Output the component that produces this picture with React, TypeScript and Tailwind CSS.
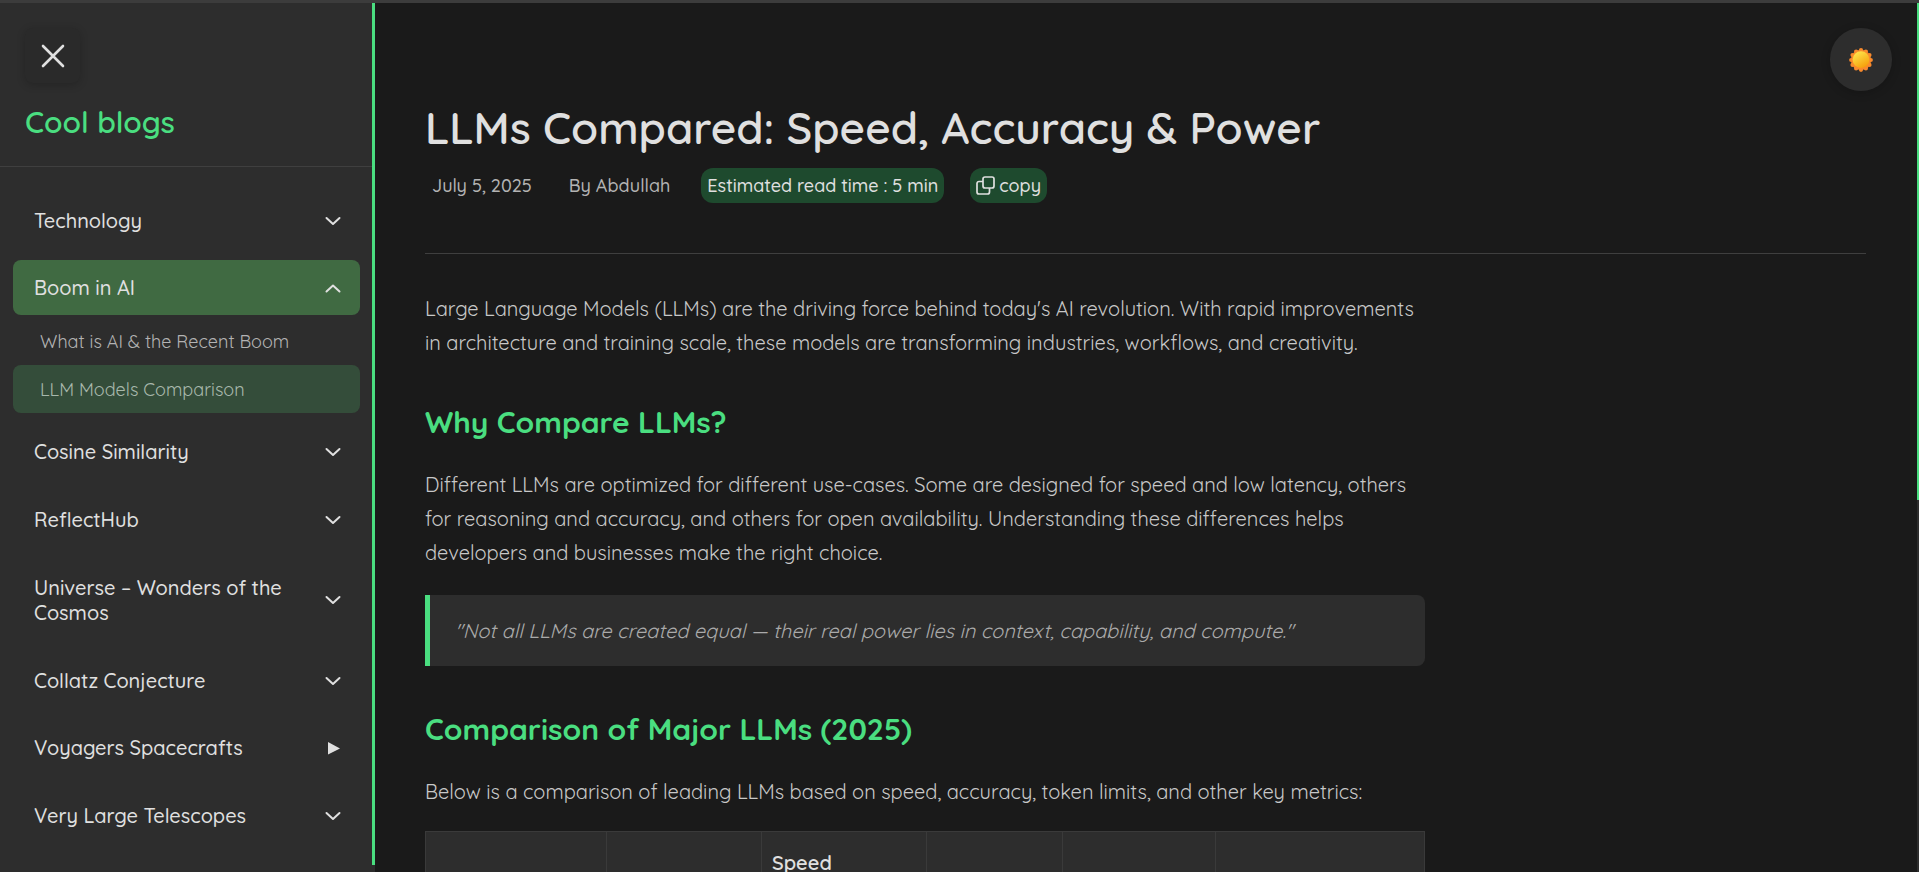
import React from "react";

const font = { fontFamily: '"Quicksand", Lato, "Noto Sans", sans-serif' };

function Chevron({ up }: { up?: boolean }) {
  return (
    <svg width="16" height="16" viewBox="0 0 16 16" fill="none" stroke="#e0e0e0" strokeWidth="2" strokeLinecap="round" strokeLinejoin="round" className="shrink-0">
      {up ? <path d="M1.5 11.5L8 5.5l6.5 6" /> : <path d="M1.5 5l6.5 6 6.5-6" />}
    </svg>
  );
}

function Item({ label, active, up, play, h }: { label: React.ReactNode; active?: boolean; up?: boolean; play?: boolean; h: string }) {
  return (
    <div className={`flex items-center justify-between pl-[21px] pr-[19px] rounded-lg text-[20px] leading-[25px] text-[#e0e0e0] font-medium ${h} ${active ? "bg-[#406a42]" : ""}`}>
      <span className="block">{label}</span>
      {play ? (
        <svg width="16" height="16" viewBox="0 0 16 16" className="shrink-0"><path d="M3 2l12 6.5L3 14.5z" fill="#e0e0e0" /></svg>
      ) : (
        <Chevron up={up} />
      )}
    </div>
  );
}

function Sun() {
  const bumps = Array.from({ length: 12 }, (_, i) => {
    const a = (i * Math.PI) / 6 - Math.PI / 2;
    return { x: 12 + 9.8 * Math.cos(a), y: 12 + 9.8 * Math.sin(a) };
  });
  return (
    <svg width="24" height="24" viewBox="0 0 24 24">
      <defs>
        <linearGradient id="sung" x1="0.25" y1="0.1" x2="0.75" y2="0.95">
          <stop offset="0%" stopColor="#fde047" />
          <stop offset="100%" stopColor="#f59e0b" />
        </linearGradient>
      </defs>
      <circle cx="12" cy="12" r="10.2" fill="#f98a2c" />
      {bumps.map((b, i) => (
        <circle key={i} cx={b.x} cy={b.y} r="2.1" fill="#f98a2c" />
      ))}
      <circle cx="12" cy="11.6" r="8.4" fill="url(#sung)" />
    </svg>
  );
}

function Th({ w, children }: { w: string; children?: React.ReactNode }) {
  return <th className={`${w} border border-[#3a3a3a] bg-[#2d2d2d] px-[10px] py-[14px] text-left font-semibold text-[#e0e0e0] text-[20px] leading-[34px] align-middle`}>{children}</th>;
}

export default function App() {
  return (
    <div className="h-[872px] overflow-hidden flex flex-col bg-[#1a1a1a]" style={font}>
      <div className="h-[3px] shrink-0 bg-[#3c3c3c]" />
      <div className="flex flex-1 min-h-0">
        <aside className="w-[375px] shrink-0 flex bg-[#2d2d2d]">
          <div className="flex-1 min-w-0 flex flex-col">
            <div className="pt-[25px] pl-[25px] pb-[20px] border-b border-[#3f3f3f] h-[164px]">
              <button className="w-[55px] h-[55px] flex items-center justify-center rounded-lg bg-[#2a2a2a] shadow-[0_2px_8px_rgba(0,0,0,0.2)]">
                <svg width="24" height="24" viewBox="0 0 24 24" fill="none" stroke="#e0e0e0" strokeWidth="2.6" strokeLinecap="round"><path d="M2 2l20 20M22 2L2 22" /></svg>
              </button>
              <div className="mt-[21px] text-[#4ade80] text-[30px] leading-[36px] font-semibold">Cool blogs</div>
            </div>
            <nav className="pl-[13px] pr-[12px] pt-[26px] flex flex-col">
              <Item label="Technology" h="h-[55px]" />
              <div className="h-[12px]" />
              <Item label="Boom in AI" active up h="h-[55px]" />
              <div className="h-[3px]" />
              <div className="h-[47px] flex items-center pl-[27px] text-[18px] text-[#b3b3b3]">What is AI &amp; the Recent Boom</div>
              <div className="h-[48px] flex items-center pl-[27px] rounded-lg bg-[#344d3a] text-[18px] text-[#a8b8ac]">LLM Models Comparison</div>
              <div className="h-[11px]" />
              <Item label="Cosine Similarity" h="h-[55px]" />
              <div className="h-[13px]" />
              <Item label="ReflectHub" h="h-[55px]" />
              <div className="h-[13px]" />
              <Item label={<>Universe – Wonders of the<br />Cosmos</>} h="h-[80px]" />
              <div className="h-[13px]" />
              <Item label="Collatz Conjecture" h="h-[55px]" />
              <div className="h-[12px]" />
              <Item label="Voyagers Spacecrafts" play h="h-[55px]" />
              <div className="h-[13px]" />
              <Item label="Very Large Telescopes" h="h-[55px]" />
            </nav>
          </div>
          <div className="w-[3px] shrink-0">
            <div className="h-[862px] bg-[#4ade80]" />
          </div>
        </aside>
        <main className="flex-1 min-w-0 relative pl-[50px] pr-[53px] pt-[89px] overflow-hidden">
          <button className="absolute right-[27px] top-[25px] w-[62px] h-[63px] rounded-full bg-[#2d2d2d] flex items-center justify-center shadow-[0_2px_10px_rgba(0,0,0,0.2)]">
            <Sun />
          </button>
          <h1 className="text-[44px] leading-[72px] font-semibold text-[#e0e0e0]">LLMs Compared: Speed, Accuracy &amp; Power</h1>
          <div className="mt-[4px] flex items-center text-[#b3b3b3] text-[18px] h-[36px] pb-[1px] font-medium">
            <span className="ml-[7px]">July 5, 2025</span>
            <span className="ml-[37px]">By Abdullah</span>
            <span className="ml-[31px] h-[35px] px-[6px] flex items-center rounded-xl bg-[#1e4a2e] text-[#e0e0e0]">Estimated read time : 5 min</span>
            <span className="ml-[26px] h-[35px] px-[6px] flex items-center gap-[4px] rounded-xl bg-[#1e4a2e] text-[#e0e0e0]">
              <svg width="19" height="19" viewBox="0 0 19 19" fill="none" stroke="#e0e0e0" strokeWidth="1.7" strokeLinejoin="round"><rect x="7" y="1" width="11" height="11" rx="2" /><path d="M7 5.5H3a2 2 0 0 0-2 2V16a2 2 0 0 0 2 2h8.5a2 2 0 0 0 2-2v-4" /></svg>
              copy
            </span>
          </div>
          <hr className="mt-[49px] border-0 border-t border-[#3f3f3f]" />
          <article className="w-[1000px] text-[#c8c8c8] text-[20px] leading-[34px] mt-[38px]">
            <p>Large Language Models (LLMs) are the driving force behind today's AI revolution. With rapid improvements<br />in architecture and training scale, these models are transforming industries, workflows, and creativity.</p>
            <h2 className="mt-[40px] text-[#4ade80] text-[30px] leading-[44px] font-bold">Why Compare LLMs?</h2>
            <p className="mt-[24px]">Different LLMs are optimized for different use-cases. Some are designed for speed and low latency, others<br />for reasoning and accuracy, and others for open availability. Understanding these differences helps<br />developers and businesses make the right choice.</p>
            <blockquote className="mt-[25px] h-[71px] flex items-center pl-[25px] border-l-[5px] border-[#4ade80] rounded-r-lg bg-[#2d2d2d] italic text-[#aaaaaa]">"Not all LLMs are created equal — their real power lies in context, capability, and compute."</blockquote>
            <h2 className="mt-[41px] text-[#4ade80] text-[30px] leading-[44px] font-bold">Comparison of Major LLMs (2025)</h2>
            <p className="mt-[24px]">Below is a comparison of leading LLMs based on speed, accuracy, token limits, and other key metrics:</p>
            <table className="mt-[22px] w-[999px] border-collapse table-fixed">
              <thead>
                <tr>
                  <Th w="w-[181px]">Model</Th>
                  <Th w="w-[155px]">Company</Th>
                  <Th w="w-[165px]">Speed<br />(tokens/sec)</Th>
                  <Th w="w-[136px]">Accuracy</Th>
                  <Th w="w-[153px]">Max Tokens</Th>
                  <Th w="w-[209px]">Use Case</Th>
                </tr>
              </thead>
            </table>
          </article>
          <div className="absolute right-0 top-0 bottom-0 w-[2px] bg-[#2d2d2d]">
            <div className="h-[497px] bg-[#4ade80]" />
          </div>
        </main>
      </div>
    </div>
  );
}
